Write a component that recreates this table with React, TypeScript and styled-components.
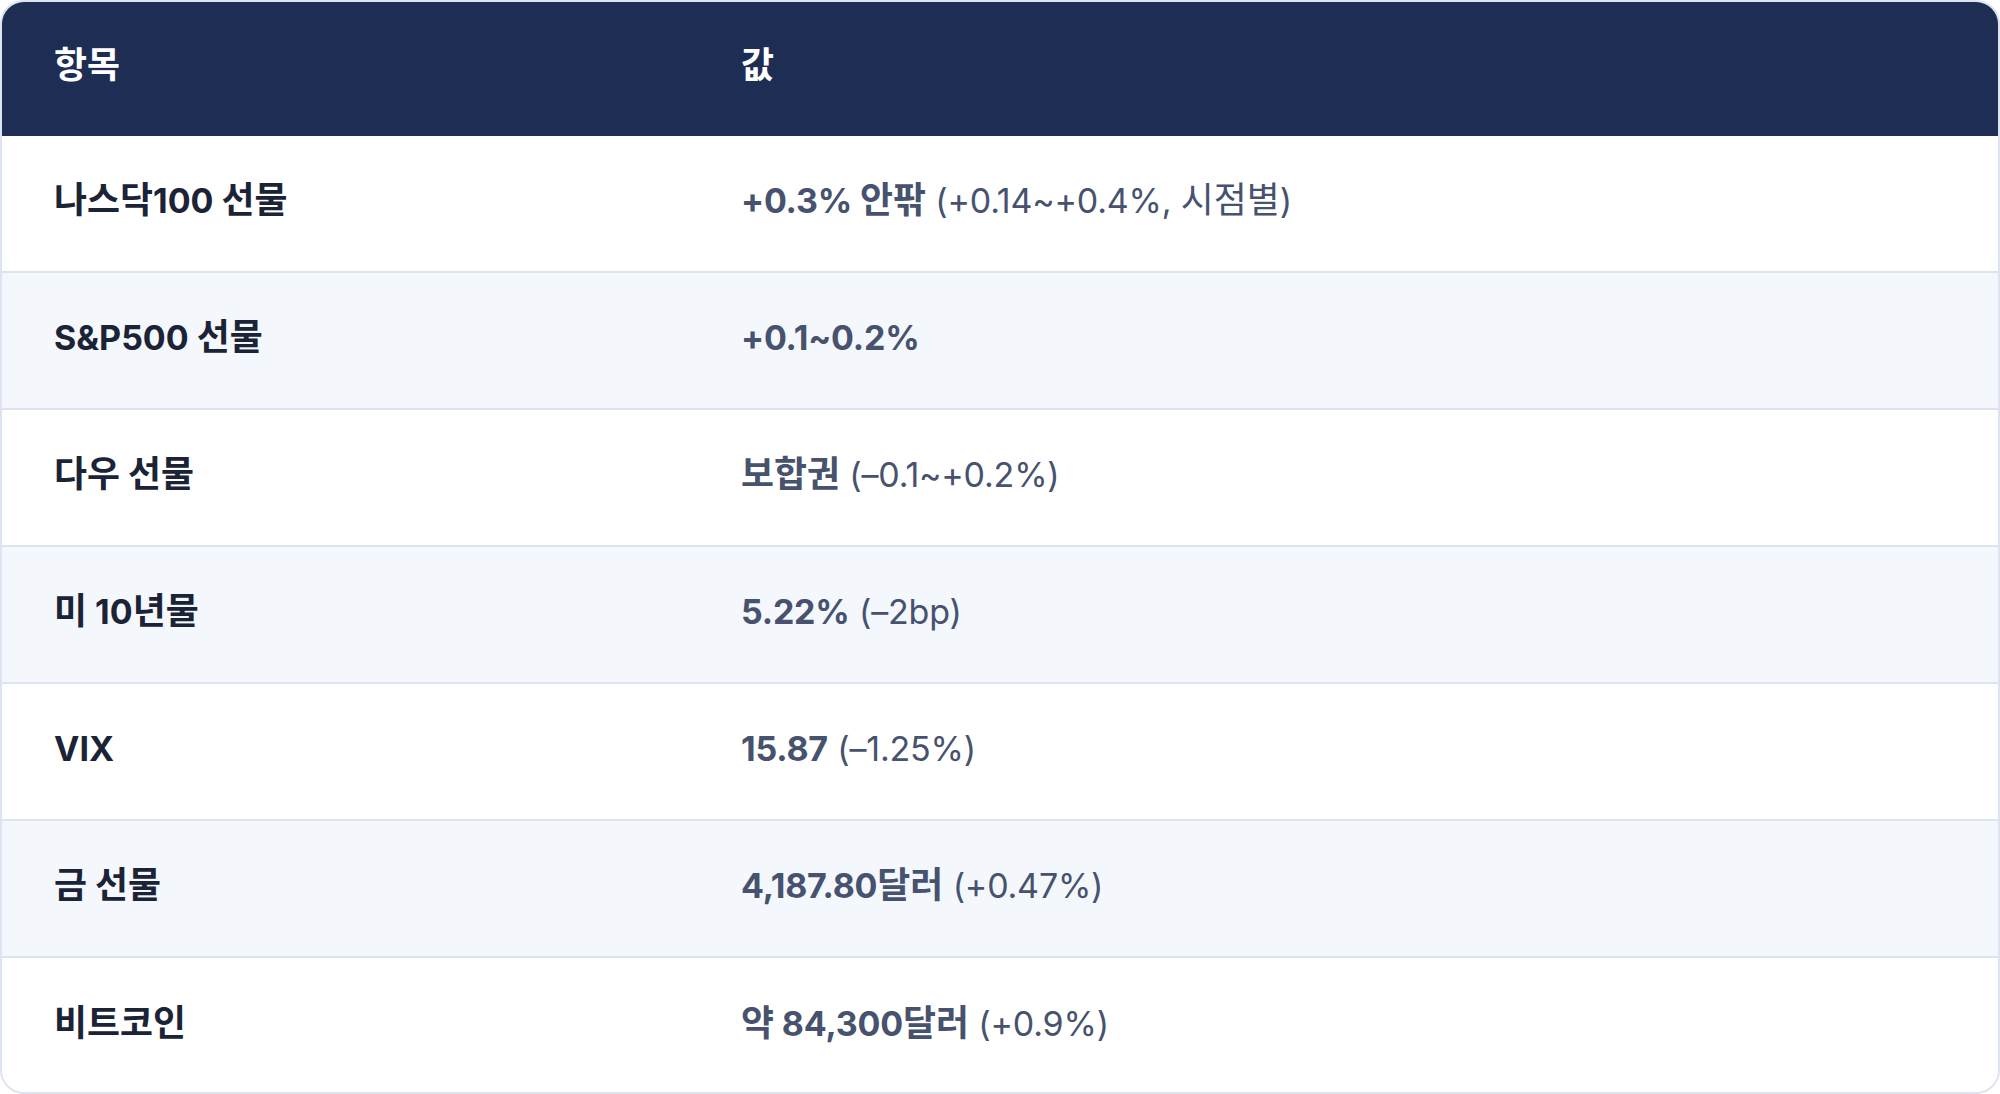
import React from 'react';
import styled, { createGlobalStyle } from 'styled-components';

const GlobalStyle = createGlobalStyle`
  html, body {
    margin: 0;
    padding: 0;
    background: #ffffff;
  }
  body {
    font-family: Inter, 'Noto Sans CJK KR', sans-serif;
  }
`;

const Wrapper = styled.div`
  width: 2000px;
  height: 1094px;
  box-sizing: border-box;
  border: 2px solid #dde4f1;
  border-radius: 24px;
  overflow: hidden;
  background: #ffffff;
`;

const Table = styled.table`
  width: 100%;
  border-collapse: separate;
  border-spacing: 0;
  table-layout: fixed;
  font-size: 34px;
`;

const HeadCell = styled.th<{ $width?: string }>`
  width: ${(p) => p.$width || 'auto'};
  height: 134px;
  padding: 0 52px 8px;
  box-sizing: border-box;
  background: #1e2d54;
  color: #ffffff;
  font-weight: 700;
  text-align: left;
  vertical-align: middle;
`;

const Row = styled.tr<{ $striped: boolean }>`
  background: ${(p) => (p.$striped ? '#f4f7fc' : '#ffffff')};
`;

const Cell = styled.td<{ $last: boolean }>`
  height: 137px;
  padding: 0 52px 6px;
  box-sizing: border-box;
  border-bottom: ${(p) => (p.$last ? 'none' : '2px solid #dde4f1')};
  vertical-align: middle;
  white-space: nowrap;
`;

const Label = styled(Cell)`
  color: #1b2336;
  font-weight: 700;
`;

const Value = styled(Cell)`
  color: #46526e;
  font-weight: 400;
  letter-spacing: -0.2px;
`;

const Strong = styled.strong`
  font-weight: 700;
`;

// hangul runs are set a touch larger than the latin text around them
const Hangul = styled.span`
  font-size: 1.055em;
  line-height: 1;
  letter-spacing: 0;
`;

function Text({ children }: { children: string }) {
  const parts = children.split(/([\uAC00-\uD7A3]+)/);
  return (
    <>
      {parts.map((part, i) => (/[\uAC00-\uD7A3]/.test(part) ? <Hangul key={i}>{part}</Hangul> : part))}
    </>
  );
}

interface Item {
  label: string;
  strong: string;
  rest?: string;
}

const items: Item[] = [
  { label: '나스닥100 선물', strong: '+0.3% 안팎', rest: ' (+0.14~+0.4%, 시점별)' },
  { label: 'S&P500 선물', strong: '+0.1~0.2%' },
  { label: '다우 선물', strong: '보합권', rest: ' (–0.1~+0.2%)' },
  { label: '미 10년물', strong: '5.22%', rest: ' (–2bp)' },
  { label: 'VIX', strong: '15.87', rest: ' (–1.25%)' },
  { label: '금 선물', strong: '4,187.80달러', rest: ' (+0.47%)' },
  { label: '비트코인', strong: '약 84,300달러', rest: ' (+0.9%)' },
];

export default function App() {
  return (
    <>
      <GlobalStyle />
      <Wrapper>
        <Table>
          <thead>
            <tr>
              <HeadCell $width="687px">
                <Text>항목</Text>
              </HeadCell>
              <HeadCell>
                <Text>값</Text>
              </HeadCell>
            </tr>
          </thead>
          <tbody>
            {items.map((item, i) => {
              const last = i === items.length - 1;
              return (
                <Row key={item.label} $striped={i % 2 === 1}>
                  <Label $last={last}>
                    <Text>{item.label}</Text>
                  </Label>
                  <Value $last={last}>
                    <Strong>
                      <Text>{item.strong}</Text>
                    </Strong>
                    {item.rest && <Text>{item.rest}</Text>}
                  </Value>
                </Row>
              );
            })}
          </tbody>
        </Table>
      </Wrapper>
    </>
  );
}
